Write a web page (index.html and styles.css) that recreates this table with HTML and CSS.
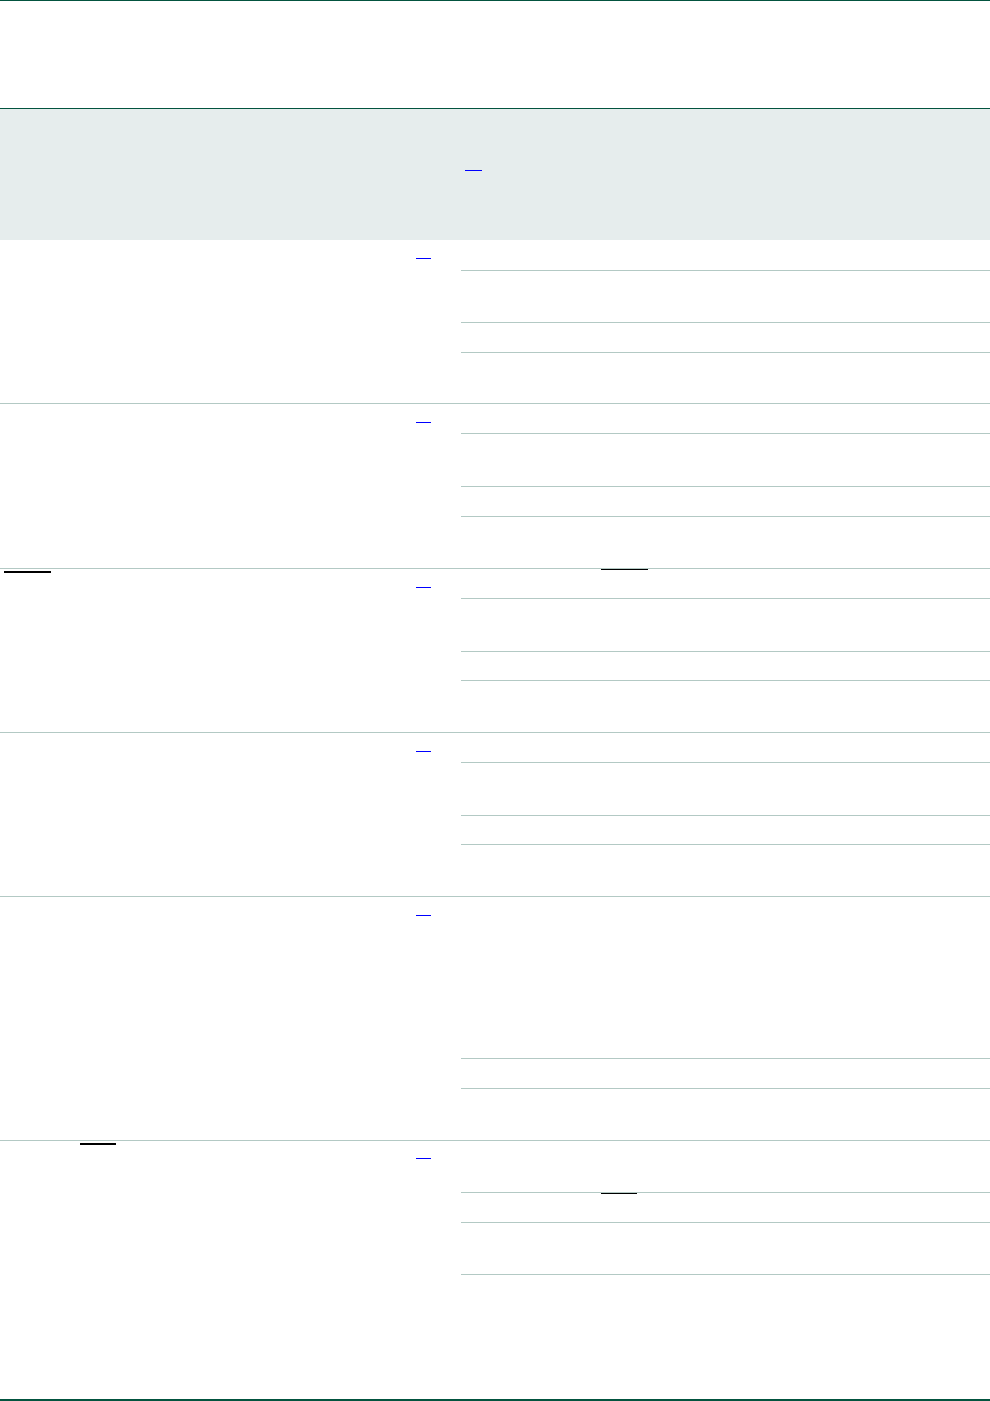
FILE: index.html
```html
<!DOCTYPE html>
<html lang="en">
<head>
<meta charset="utf-8">
<title>Table</title>
<link rel="stylesheet" href="styles.css">
</head>
<body>
<div class="page">
  <div class="top"></div>
  <div class="band">
    <div class="band-left"></div>
    <div class="band-right"><a class="ref ref-head" href="#" aria-label="reference"></a></div>
  </div>

  <div class="row first">
    <div class="cell-left"></div>
    <div class="cell-mid"><a class="ref" href="#" aria-label="reference"></a></div>
    <div class="cell-right">
      <div class="sub h30"></div>
      <div class="sub line h52"></div>
      <div class="sub line h30"></div>
      <div class="sub line h51"></div>
    </div>
  </div>

  <div class="row">
    <div class="cell-left"></div>
    <div class="cell-mid"><a class="ref" href="#" aria-label="reference"></a></div>
    <div class="cell-right">
      <div class="sub h29"></div>
      <div class="sub line h53"></div>
      <div class="sub line h30"></div>
      <div class="sub line h52"></div>
    </div>
  </div>

  <div class="row">
    <div class="cell-left"><span class="ul ul-a"></span></div>
    <div class="cell-mid"><a class="ref" href="#" aria-label="reference"></a></div>
    <div class="cell-right">
      <div class="sub h29"><span class="ul ul-b"></span></div>
      <div class="sub line h53"></div>
      <div class="sub line h29"></div>
      <div class="sub line h52"></div>
    </div>
  </div>

  <div class="row">
    <div class="cell-left"></div>
    <div class="cell-mid"><a class="ref" href="#" aria-label="reference"></a></div>
    <div class="cell-right">
      <div class="sub h29"></div>
      <div class="sub line h53"></div>
      <div class="sub line h29"></div>
      <div class="sub line h52"></div>
    </div>
  </div>

  <div class="row">
    <div class="cell-left"></div>
    <div class="cell-mid"><a class="ref" href="#" aria-label="reference"></a></div>
    <div class="cell-right">
      <div class="sub h161"></div>
      <div class="sub line h30"></div>
      <div class="sub line h52"></div>
    </div>
  </div>

  <div class="row last">
    <div class="cell-left"><span class="ul ul-c"></span></div>
    <div class="cell-mid"><a class="ref ref-late" href="#" aria-label="reference"></a></div>
    <div class="cell-right">
      <div class="sub h51"></div>
      <div class="sub line h30"><span class="ul ul-d"></span></div>
      <div class="sub line h52"></div>
      <div class="sub line h125"></div>
    </div>
  </div>
</div>
</body>
</html>
```

FILE: styles.css
```css
* { box-sizing: border-box; }
html, body { margin: 0; padding: 0; background: #ffffff; }
body { font-family: "Liberation Sans", Arial, sans-serif; font-size: 14px; }

.page {
  width: 990px;
  border-bottom: 2px solid #03543f;
}

.top {
  height: 109px;
  border-top: 1px solid #03543f;
  border-bottom: 1px solid #03543f;
}

.band {
  height: 131px;
  background: #e6eded;
  display: grid;
  grid-template-columns: 461px 1fr;
}

.row {
  display: grid;
  grid-template-columns: 412px 49px 1fr;
  border-top: 1px solid #b3c9c4;
}
.row.first { border-top: 0; }

.cell-left, .cell-mid, .cell-right { min-width: 0; }

.sub { width: 100%; }
.sub.line { border-top: 1px solid #b3c9c4; }

.h29 { height: 29px; }
.h30 { height: 30px; }
.h51 { height: 51px; }
.h52 { height: 52px; }
.h53 { height: 53px; }
.h125 { height: 125px; }
.h161 { height: 161px; }

.ref {
  display: block;
  width: 15px;
  height: 0;
  margin: 18px 0 0 4px;
  border-bottom: 1px solid #0000ff;
}
.ref-late { margin-top: 17px; }
.ref-head {
  width: 17px;
  margin: 61px 0 0 4px;
}

.ul {
  display: block;
  height: 0;
}
.ul-a {
  width: 47px;
  margin: 2px 0 0 4px;
  border-bottom: 2px solid #000000;
}
.ul-b {
  width: 47px;
  margin: 0 0 0 140px;
  border-top: 1px solid #000000;
}
.ul-c {
  width: 36px;
  margin: 2px 0 0 80px;
  border-bottom: 2px solid #000000;
}
.ul-d {
  width: 36px;
  margin: 0 0 0 140px;
  border-top: 1px solid #000000;
}
```
